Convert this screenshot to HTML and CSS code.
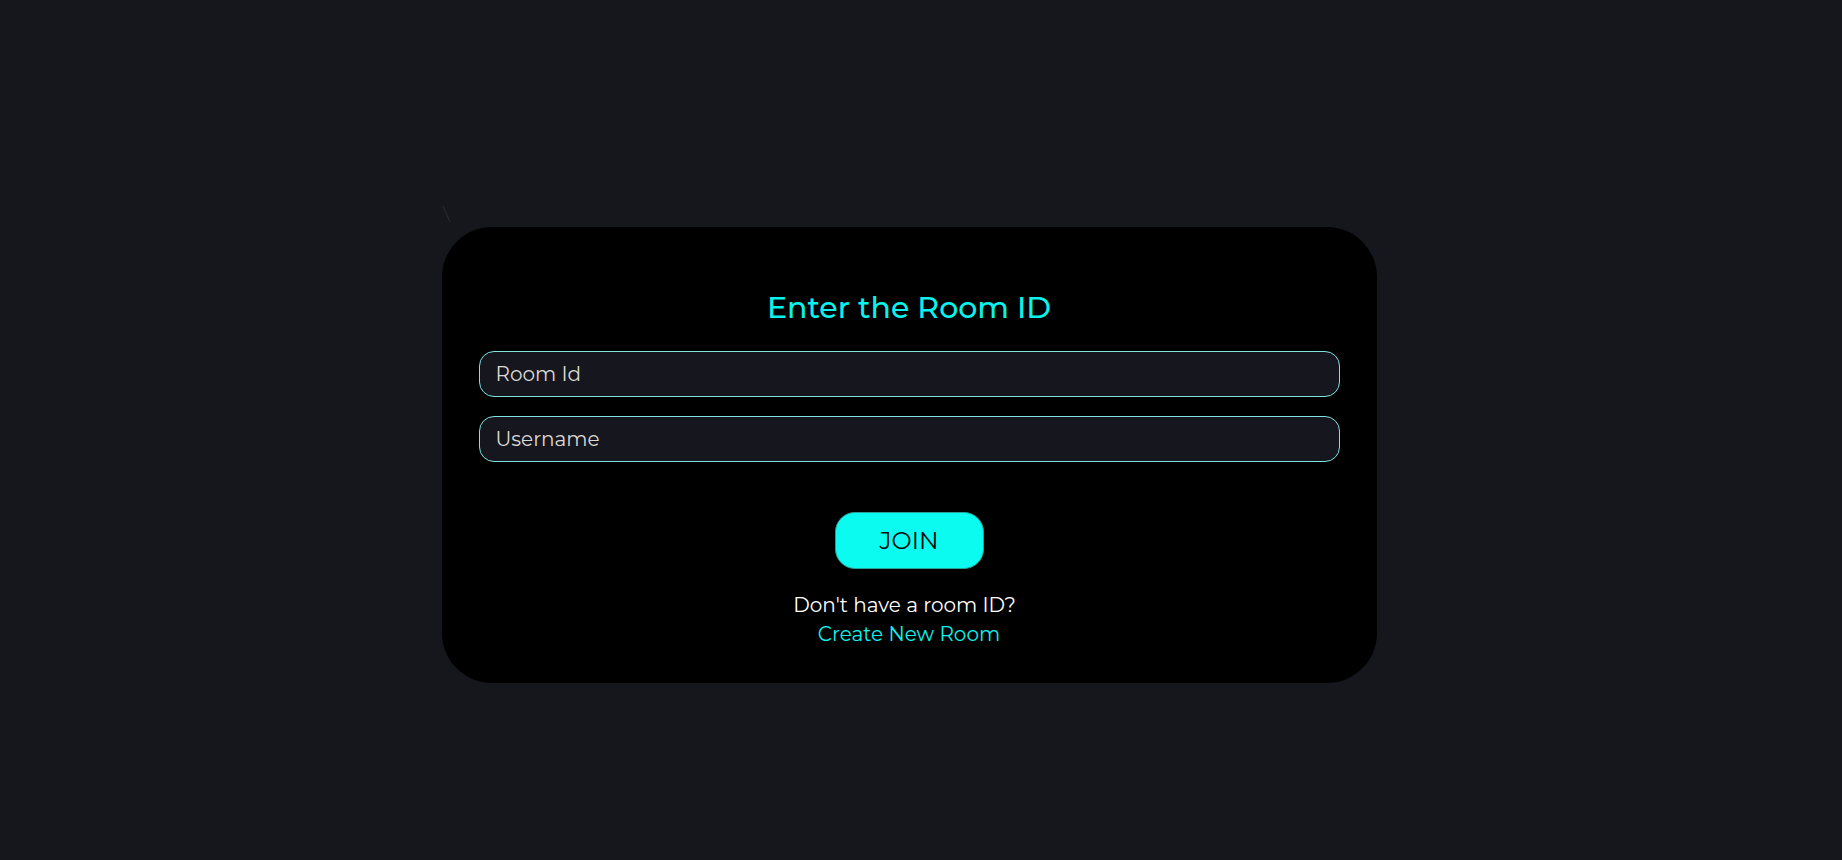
FILE: index.html
```html
<!DOCTYPE html>
<html lang="en">
<head>
<meta charset="utf-8">
<title>Join Room</title>
<link rel="stylesheet" href="styles.css">
</head>
<body>
<main class="page">
  <div class="card-wrap">
    <svg class="slash" width="10" height="18" viewBox="0 0 10 18"><line x1="1" y1="1" x2="8" y2="17" stroke="#2b2e36" stroke-width="1"/></svg>
    <section class="card">
      <h2 class="title">Enter the Room ID</h2>
      <div class="fields">
        <input class="field" type="text" placeholder="Room Id">
        <input class="field" type="text" placeholder="Username">
      </div>
      <button class="join">JOIN</button>
      <p class="hint"><span class="question">Don't have a room ID?</span><br><a class="create" href="#">Create New Room</a></p>
    </section>
  </div>
</main>
</body>
</html>
```

FILE: styles.css
```css
* { box-sizing: border-box; }
html, body { margin: 0; padding: 0; }
body {
  background: #16171d;
  font-family: "Montserrat", "DejaVu Sans", sans-serif;
  width: 1842px;
  height: 860px;
  overflow: hidden;
}
.page {
  padding-top: 227px;
  display: flex;
  justify-content: center;
}
.card-wrap {
  position: relative;
  margin-right: 24px;
}
.slash {
  position: absolute;
  left: 0;
  top: -22px;
}
.card {
  width: 935px;
  height: 456px;
  background: #000;
  border-radius: 50px;
  padding: 63px 37px 0;
  display: flex;
  flex-direction: column;
  align-items: center;
}
.title {
  margin: 0;
  font-size: 30px;
  line-height: 36px;
  font-weight: 500;
  color: #0af2ec;
}
.fields {
  width: 100%;
  margin-top: 25px;
  display: flex;
  flex-direction: column;
  gap: 19px;
}
.field {
  width: 100%;
  height: 46px;
  background: #16161e;
  border: 1px solid #7fe3df;
  border-radius: 15px;
  padding: 0 16px;
  font-family: inherit;
  font-size: 20px;
  color: #ddd;
  outline: none;
}
.field::placeholder { color: #dcd9d4; }
.join {
  margin-top: 50px;
  width: 149px;
  height: 57px;
  border: 1px solid #2a9f99;
  border-radius: 20px;
  background: #0cfbf0;
  color: #0a0a0a;
  font-family: inherit;
  font-size: 24px;
  cursor: pointer;
  padding: 0;
}
.hint {
  margin: 22px 0 0;
  font-size: 20px;
  line-height: 29px;
  color: #fff;
  text-align: center;
}
.question {
  margin-right: 9px;
}
.create {
  color: #0ff3ec;
  text-decoration: none;
}
```
